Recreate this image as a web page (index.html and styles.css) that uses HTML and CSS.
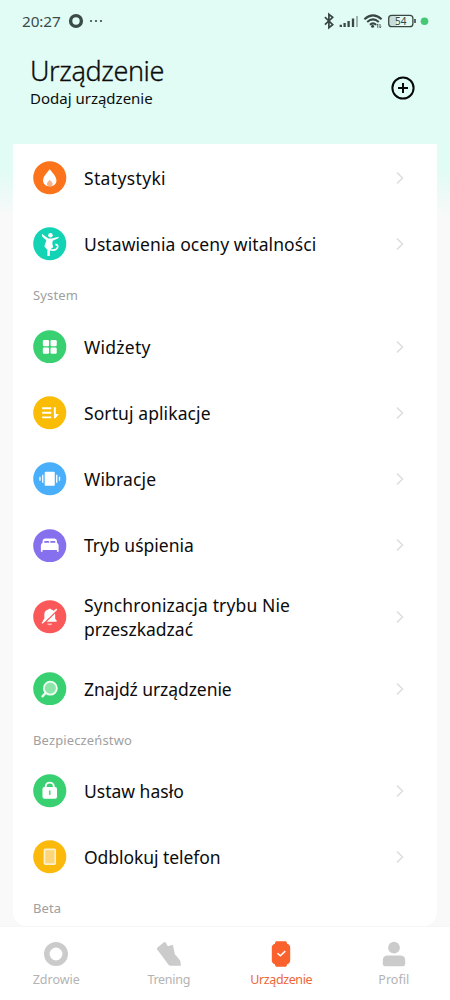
FILE: index.html
```html
<!DOCTYPE html>
<html lang="pl">
<head>
<meta charset="utf-8">
<meta name="viewport" content="width=device-width, initial-scale=1">
<title>Urządzenie</title>
<link rel="stylesheet" href="styles.css">
</head>
<body>
<svg class="defs" width="0" height="0"><defs>
  <symbol id="chevron" viewBox="0 0 10 14"><path d="M2 1.5 7.5 7 2 12.5" fill="none" stroke="#dedede" stroke-width="1.6"/></symbol>
</defs></svg>
<div class="app">
  <header class="status">
    <span class="clock">20:27</span>
    <svg class="ring" width="16" height="16" viewBox="0 0 16 16"><circle cx="8" cy="8" r="5.4" fill="none" stroke="#3a4b49" stroke-width="3.4"/></svg>
    <svg class="dots" width="14" height="4" viewBox="0 0 14 4" fill="#3a4b49"><circle cx="2" cy="2" r="1.1"/><circle cx="7" cy="2" r="1.1"/><circle cx="12" cy="2" r="1.1"/></svg>
    <svg class="signals" width="110" height="20" viewBox="320 11 110 20" fill="none" stroke="#3a4644">
      <path d="M324.900 17.200 332.700 24.700 328.900 27.700V14.300L332.700 17.400 324.900 24.700" stroke-width="1.7"/>
      <g stroke-width="2.3"><path d="M340.8 27V24.7M344.6 27V23M348.6 27V21M353 27V18.6"/><path d="M357 27V16" stroke="#a3b3af" stroke-width="2"/></g>
      <path d="M364.4 19.2Q373 11.6 381.6 19.2M367.2 22Q373 16.8 378.8 22M369.9 24.7Q373 22 376.1 24.7" stroke-width="2"/>
      <circle cx="372.6" cy="26.3" r="1.5" fill="#3a4644" stroke="none"/>
      <path d="M377.8 27.8V24M376.6 25.2l1.2-1.3M380 24V27.8M381.2 26.6 380 27.9" stroke-width=".9"/>
      <rect x="389" y="15.8" width="8" height="10.4" rx="2" fill="#c9ddd8" stroke="none"/>
      <rect x="388.7" y="15.3" width="24.2" height="11.4" rx="3" stroke-width="1.3"/>
      <path d="M415 19v4" stroke-width="1.6"/>
      <text class="charge" x="400.8" y="24.6" text-anchor="middle">54</text>
      <circle cx="424.5" cy="21.2" r="3.8" fill="#43c873" stroke="none"/>
    </svg>
  </header>
  <section class="heading">
    <div>
      <h1>Urządzenie</h1>
      <p>Dodaj urządzenie</p>
    </div>
    <svg class="add" width="24" height="24" viewBox="0 0 24 24" fill="none" stroke="#060909"><circle cx="12" cy="12" r="10.6" stroke-width="2"/><path d="M12 7v10M7 12h10" stroke-width="2"/></svg>
  </section>
  <main class="card">
    <div class="row"><svg class="icon" viewBox="0 0 34 34"><circle cx="17" cy="17" r="16.8" fill="#fb741b"/><path d="M17 8.3c2 2.7 6.8 7.2 6.8 11.4 0 3.800-3 6-6.800 6s-6.800-2.200-6.800-6C10.200 15.500 15 11 17 8.300z" fill="#fff"/><path d="M17 19.200c1.600 1.300 2.900 2.500 2.900 4.100 0 1.500-1 2.400-2.900 2.400s-2.900-.9-2.900-2.400c0-1.600 1.300-2.800 2.900-4.100z" fill="#f9b187"/></svg><span class="label l1">Statystyki</span><svg class="chev"><use href="#chevron"/></svg></div>
    <div class="row"><svg class="icon" viewBox="0 0 34 34"><circle cx="17" cy="17" r="16.8" fill="#12d4b4"/><circle cx="17.700" cy="8.400" r="2.300" fill="#fff"/><path d="M9 6.800 9.300 9.600 13.500 13.400 11.900 18.600 14.600 21.300 14.600 29.500 17 29.500 17.200 22.800 20.500 20.600 19.600 17 20 14 25.600 11.300 26.300 9.800 18.800 11.700 15.500 11.700z" fill="#fff"/><path d="M12 18.800c2.500 4.500 8.500 5.600 11.500 3.700 2.500-1.800 2.200-4.500-.8-4.900" fill="none" stroke="#fff" stroke-width="1.700"/></svg><span class="label l2">Ustawienia oceny witalności</span><svg class="chev"><use href="#chevron"/></svg></div>
    <h2 class="s1">System</h2>
    <div class="row"><svg class="icon" viewBox="0 0 34 34"><circle cx="17" cy="17" r="16.8" fill="#38d070"/><g fill="#fff"><rect x="10" y="10.200" width="6.300" height="6.300" rx="1.300"/><rect x="17.800" y="10.200" width="6.300" height="6.300" rx="1.300"/><rect x="10" y="17.800" width="6.300" height="6.300" rx="1.300"/><rect x="17.800" y="17.800" width="6.300" height="6.300" rx="1.300"/></g></svg><span class="label l3">Widżety</span><svg class="chev"><use href="#chevron"/></svg></div>
    <div class="row"><svg class="icon" viewBox="0 0 34 34"><circle cx="17" cy="17" r="16.8" fill="#fbbc05"/><path d="M9.300 12.500h9.200M9.300 17.100h9.200M9.300 21.700h9.200" stroke="#fff" stroke-width="2"/><path d="M21.200 11.500h1.900v6.800h3.200l-3.600 4.400h-1.500z" fill="#fff"/></svg><span class="label l4">Sortuj aplikacje</span><svg class="chev"><use href="#chevron"/></svg></div>
    <div class="row"><svg class="icon" viewBox="0 0 34 34"><circle cx="17" cy="17" r="16.8" fill="#4aaffb"/><rect x="11.900" y="9.800" width="10.200" height="14.400" rx="1.200" fill="#fff"/><path d="M9.900 13v8M24.100 13v8" stroke="#fff" stroke-width="1.300"/><path d="M7.100 15v4M26.900 15v4" stroke="#fff" stroke-width="1.300"/></svg><span class="label l5">Wibracje</span><svg class="chev"><use href="#chevron"/></svg></div>
    <div class="row"><svg class="icon" viewBox="0 0 34 34"><circle cx="17" cy="17" r="16.8" fill="#8670ed"/><path d="M9.700 16.300v-3.500q0-3.100 3.100-3.100h8.400q3.100 0 3.100 3.100v3.500" fill="#fff"/><rect x="11.200" y="12.100" width="5.400" height="2.400" rx="1.200" fill="#8670ed"/><rect x="17.400" y="12.100" width="5.400" height="2.400" rx="1.200" fill="#8670ed"/><path d="M8 17q0-3 3-3h12q3 0 3 3v6h-1.700v-1.700H9.700V23H8z" fill="#fff"/></svg><span class="label l6">Tryb uśpienia</span><svg class="chev"><use href="#chevron"/></svg></div>
    <div class="row tall"><svg class="icon" viewBox="0 0 34 34"><circle cx="17" cy="17" r="16.8" fill="#fb5859"/><path d="M10 22.100v-1.300l1.500-1.800v-4.200c0-2.700 1.700-4.700 4.500-5.300v-.6h2v.6c2.800.6 4.500 2.600 4.500 5.300V19l1.500 1.800v1.300z" fill="#fff"/><path d="M14.500 23.800h5a2.500 1.900 0 0 1-5 0z" fill="#fbb"/><path d="M10 24.800 25 10.200" stroke="#fb5859" stroke-width="1.500"/><path d="M9.200 23.600 24.100 9.300" stroke="#fff" stroke-width="1.600"/></svg><span class="label"><span class="l7">Synchronizacja trybu Nie</span><br><span class="l8">przeszkadzać</span></span><svg class="chev"><use href="#chevron"/></svg></div>
    <div class="row"><svg class="icon" viewBox="0 0 34 34"><circle cx="17" cy="17" r="16.8" fill="#38d070"/><path d="m13 21-3.400 3.700" stroke="#effff4" stroke-width="2.400" stroke-linecap="round"/><circle cx="17.600" cy="16.400" r="6.600" fill="#8ce6aa" stroke="#effff4" stroke-width="1.900"/></svg><span class="label l9">Znajdź urządzenie</span><svg class="chev"><use href="#chevron"/></svg></div>
    <h2 class="s2">Bezpieczeństwo</h2>
    <div class="row"><svg class="icon" viewBox="0 0 34 34"><circle cx="17" cy="17" r="16.8" fill="#38d070"/><path d="M12.900 14.300v-1.500a4.100 4.100 0 0 1 8.200 0v1.500" fill="none" stroke="#fff" stroke-width="1.900"/><rect x="9.600" y="13.300" width="14.800" height="11.800" rx="2" fill="#fff"/><path d="M17 17.300v3.200" stroke="#58d985" stroke-width="1.700" stroke-linecap="round"/></svg><span class="label l10">Ustaw hasło</span><svg class="chev"><use href="#chevron"/></svg></div>
    <div class="row"><svg class="icon" viewBox="0 0 34 34"><circle cx="17" cy="17" r="16.8" fill="#fbb90b"/><rect x="11.600" y="9.500" width="11" height="15" rx=".8" fill="#fdd67b" stroke="#fff2cf" stroke-width="1.600"/></svg><span class="label l11">Odblokuj telefon</span><svg class="chev"><use href="#chevron"/></svg></div>
    <h2 class="s3">Beta</h2>
  </main>
  <nav class="tabs">
    <div class="tab"><svg width="26" height="26" viewBox="0 0 26 26"><circle cx="13" cy="13" r="9.200" fill="none" stroke="#cbcbcb" stroke-width="5.600"/></svg><span class="t1">Zdrowie</span></div>
    <div class="tab"><svg width="26" height="26" viewBox="0 0 26 26"><path d="M1.800 6.200 8 1.300q1-.7 1.800.4l1.600 2.700q.6 1 1.600.6l2.800-.9q1-.2 1.300.8l1.600 7.500q.3 1.300 1.300 2.200l3.700 4.300q.6.700.7 1.700l.5 3.300q.1.900-.9.900H14.500q-1.300 0-2-1L1.200 8.500q-.9-1.300.6-2.300z" fill="#cbcbcb"/></svg><span class="t2">Trening</span></div>
    <div class="tab active"><svg width="26" height="26" viewBox="0 0 26 26"><path d="M8.500.3h9q.9 0 1.200 1l.4 1.400q3.100 1 3.100 3.800v13q0 2.800-3.100 3.800l-.4 1.400q-.3 1-1.200 1h-9q-.9 0-1.200-1l-.4-1.400q-3.100-1-3.100-3.800v-13q0-2.800 3.100-3.800l.4-1.400q.3-1 1.200-1z" fill="#fa612c"/><path d="m9.500 12.200 2.800 2.600 5-4.700" fill="none" stroke="#fff" stroke-width="1.500"/></svg><span class="t3">Urządzenie</span></div>
    <div class="tab"><svg width="26" height="26" viewBox="0 0 26 26" fill="#cbcbcb"><circle cx="13" cy="6.700" r="5.900"/><path d="M1.800 23v-3.500q0-5 5-5h12.400q5 0 5 5V23q0 2.200-2.200 2.200H4q-2.200 0-2.200-2.200z"/></svg><span class="t4">Profil</span></div>
  </nav>
</div>
</body>
</html>
```
FILE: styles.css
```css
* { box-sizing: border-box; }
body { margin: 0; font-family: "Noto Sans", sans-serif; color: #0c0c0c; }
.defs { display: block; }
.app { width: 450px; height: 1000px; overflow: hidden; display: flex; flex-direction: column; background: linear-gradient(#e1fbf5 0, #e1fbf5 170px, #f9f9f9 218px); }
.status { height: 42px; flex: none; display: flex; align-items: center; padding-left: 22px; color: #3a4b49; }
.clock { width: 40px; font-size: 15.3px; letter-spacing: -.1px; white-space: nowrap; }
.ring { margin-left: 5.5px; }
.dots { margin-left: 5px; }
.signals { margin-left: auto; margin-right: 20px; }
.charge { font: 10px "Noto Sans", sans-serif; fill: #3a4644; stroke: none; }
.heading { height: 102px; flex: none; display: flex; justify-content: space-between; padding: 12px 35px 0 30px; }
.heading h1 { margin: 0; font-weight: 300; font-size: 27px; line-height: 34px; letter-spacing: -.4px; white-space: nowrap; -webkit-text-stroke: .3px currentColor; }
.heading p { margin: -1px 0 0; font-size: 15px; line-height: 22px; white-space: nowrap; }
.add { margin-top: 22px; }
.card { height: 782px; flex: none; margin: 0 13px; padding: .8px 32px 0 20px; background: #fff; border-radius: 0 0 14px 14px; }
.row { height: 66.3px; display: flex; align-items: center; }
.row.tall { height: 76.8px; }
.icon { width: 33.5px; height: 33.5px; flex: none; }
.label { margin-left: 17.5px; font-size: 17.5px; line-height: 24px; white-space: nowrap; }
.l1 { letter-spacing: .35px; }
.l2, .l4 { letter-spacing: .09px; }
.l3 { letter-spacing: .25px; }
.l5 { letter-spacing: .15px; }
.l7 { letter-spacing: .13px; }
.l9, .l11 { letter-spacing: -.07px; }
.chev { width: 10px; height: 14px; margin-left: auto; }
.card h2 { margin: 0; height: 36px; font-size: 13px; line-height: 36px; font-weight: 400; color: #a0a0a0; letter-spacing: .13px; }
.tabs { flex: 1; display: flex; background: #fff; border-top: 1px solid #f6f6f6; }
.tab { width: 112.5px; padding-top: 14px; display: flex; flex-direction: column; align-items: center; color: #b3b3b3; }
.tab svg { flex: none; }
.tab span { margin-top: 4px; font-size: 12.5px; line-height: 18px; }
.t2 { letter-spacing: -.3px; }
.t3 { letter-spacing: -.4px; }
.tab.active { color: #ec663a; }
```
